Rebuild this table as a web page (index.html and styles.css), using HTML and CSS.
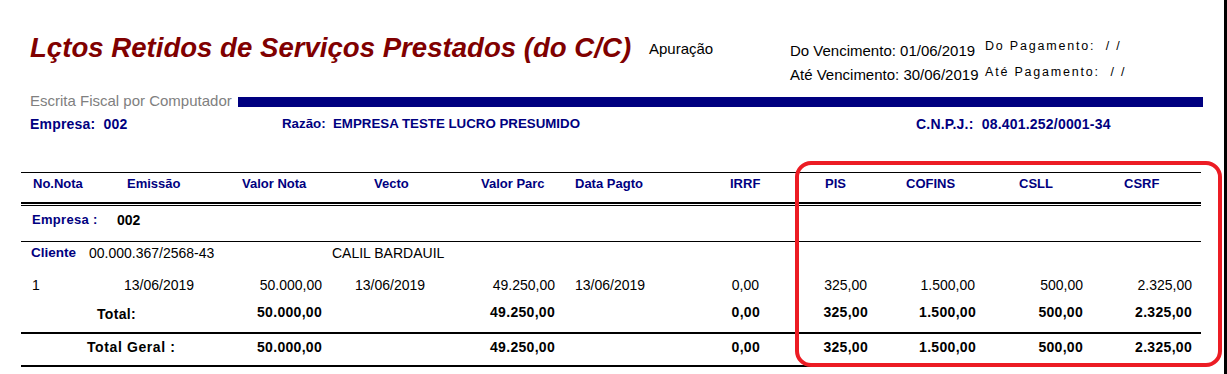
FILE: index.html
```html
<!DOCTYPE html>
<html lang="pt-BR">
<head>
<meta charset="utf-8">
<title>Lçtos Retidos de Serviços Prestados</title>
<link rel="stylesheet" href="styles.css">
</head>
<body>
<div class="page">
  <header class="head">
    <h1 class="title">Lçtos Retidos de Serviços Prestados (do C/C)</h1>
    <div class="apuracao">Apuração</div>
    <div class="venc">
      <div>Do Vencimento: 01/06/2019</div>
      <div>Até Vencimento: 30/06/2019</div>
    </div>
    <div class="pag">
      <div>Do Pagamento:&nbsp;&nbsp;/ /</div>
      <div>Até Pagamento:&nbsp;&nbsp;/ /</div>
    </div>
  </header>

  <div class="brand">
    <span class="brand-text">Escrita Fiscal por Computador</span>
    <span class="brand-bar"></span>
  </div>

  <div class="info">
    <div class="info-emp">Empresa:&nbsp;&nbsp;002</div>
    <div class="info-raz">Razão:&nbsp;&nbsp;EMPRESA TESTE LUCRO PRESUMIDO</div>
    <div class="info-cnpj">C.N.P.J.:&nbsp;&nbsp;08.401.252/0001-34</div>
  </div>

  <div class="report">
    <div class="row hdr">
      <div>No.Nota</div>
      <div>Emissão</div>
      <div>Valor Nota</div>
      <div>Vecto</div>
      <div>Valor Parc</div>
      <div>Data Pagto</div>
      <div>IRRF</div>
      <div>PIS</div>
      <div>COFINS</div>
      <div>CSLL</div>
      <div>CSRF</div>
    </div>
    <div class="rule-thick"></div>
    <div class="rule-thin"></div>

    <div class="grp">
      <span class="grp-label">Empresa :</span>
      <span class="grp-val">002</span>
    </div>

    <div class="cli">
      <span class="cli-label">Cliente</span>
      <span class="cli-code">00.000.367/2568-43</span>
      <span class="cli-name">CALIL BARDAUIL</span>
    </div>

    <div class="row data">
      <div>1</div>
      <div>13/06/2019</div>
      <div>50.000,00</div>
      <div>13/06/2019</div>
      <div>49.250,00</div>
      <div>13/06/2019</div>
      <div>0,00</div>
      <div>325,00</div>
      <div>1.500,00</div>
      <div>500,00</div>
      <div>2.325,00</div>
    </div>

    <div class="row tot sub">
      <div class="tot-label">Total:</div>
      <div>50.000,00</div>
      <div></div>
      <div>49.250,00</div>
      <div></div>
      <div>0,00</div>
      <div>325,00</div>
      <div>1.500,00</div>
      <div>500,00</div>
      <div>2.325,00</div>
    </div>

    <div class="row tot grand">
      <div class="tot-label">Total Geral :</div>
      <div>50.000,00</div>
      <div></div>
      <div>49.250,00</div>
      <div></div>
      <div>0,00</div>
      <div>325,00</div>
      <div>1.500,00</div>
      <div>500,00</div>
      <div>2.325,00</div>
    </div>
  </div>

  <div class="highlight"></div>
</div>
</body>
</html>
```

FILE: styles.css
```css
* { box-sizing: border-box; }
html, body { margin: 0; padding: 0; background: #fff; }
body { font-family: "Liberation Sans", Arial, sans-serif; color: #000; }

.page {
  position: relative;
  width: 1227px;
  height: 374px;
  border-right: 3px solid #000;
  overflow: hidden;
}

/* ---------- header ---------- */
.head {
  display: flex;
  align-items: flex-start;
  height: 90px;
  padding-left: 30px;
}
.title {
  margin: 32px 0 0;
  width: 619px;
  font-size: 27.6px;
  line-height: 32px;
  font-weight: bold;
  font-style: italic;
  color: #800000;
  white-space: nowrap;
}
.apuracao {
  margin-top: 40px;
  width: 141px;
  font-size: 15px;
  line-height: 18px;
}
.venc {
  margin-top: 39px;
  width: 195px;
  font-size: 15px;
  line-height: 24px;
  white-space: nowrap;
}
.pag {
  margin-top: 33px;
  font-size: 12.5px;
  line-height: 26px;
  letter-spacing: 1.8px;
  white-space: nowrap;
}

/* ---------- brand bar ---------- */
.brand {
  display: flex;
  align-items: center;
  height: 22px;
  padding-left: 30px;
}
.brand-text {
  width: 208px;
  font-size: 15px;
  line-height: 22px;
  color: #808080;
  white-space: nowrap;
}
.brand-bar {
  width: 965px;
  height: 10px;
  margin-top: 2px;
  background: #000080;
}

/* ---------- company info ---------- */
.info {
  display: flex;
  height: 24px;
  padding-left: 30px;
  font-size: 14px;
  line-height: 24px;
  font-weight: bold;
  color: #000080;
  white-space: nowrap;
}
.info-emp { width: 252px; letter-spacing: 0.2px; }
.info-raz { width: 634px; font-size: 13.3px; }
.info-cnpj { letter-spacing: 0.2px; }

/* ---------- report table ---------- */
.report {
  margin: 36px 0 0 21px;
  width: 1180px;
  border-top: 1px solid #000;
}
.row {
  display: grid;
  grid-template-columns: 89px 95px 120px 135px 100px 105px 100px 105px 110px 108px 113px;
  white-space: nowrap;
}

.hdr {
  height: 29px;
  font-size: 13px;
  line-height: 22px;
  font-weight: bold;
  color: #000080;
}
.hdr > :nth-child(1) { padding-left: 12px; }
.hdr > :nth-child(2) { padding-left: 17px; }
.hdr > :nth-child(3) { padding-left: 37px; }
.hdr > :nth-child(4) { padding-left: 49px; }
.hdr > :nth-child(5) { padding-left: 21px; }
.hdr > :nth-child(6) { padding-left: 15px; }
.hdr > :nth-child(7) { padding-left: 65px; }
.hdr > :nth-child(8) { padding-left: 60px; }
.hdr > :nth-child(9) { padding-left: 36px; }
.hdr > :nth-child(10) { padding-left: 39px; }
.hdr > :nth-child(11) { padding-left: 36px; }

.rule-thick { height: 2px; background: #000; margin-bottom: 1px; }
.rule-thin { height: 1px; background: #000; }

.grp {
  display: flex;
  height: 36px;
  padding: 4px 0 0 11px;
  line-height: 20px;
  border-bottom: 1px solid #000;
  font-weight: bold;
  white-space: nowrap;
}
.grp-label { width: 85px; font-size: 13px; color: #000080; letter-spacing: 0.3px; }
.grp-val { font-size: 14px; }

.cli {
  display: flex;
  height: 32px;
  padding-left: 10px;
  line-height: 22px;
  font-size: 14px;
  white-space: nowrap;
}
.cli-label { width: 58px; font-size: 13.5px; font-weight: bold; color: #000080; }
.cli-code { width: 243px; }

.data {
  height: 22px;
  font-size: 14px;
  line-height: 22px;
}
.data > :nth-child(1) { padding-left: 11px; }
.data > :nth-child(2) { padding-left: 14px; }
.data > :nth-child(3) { text-align: right; padding-right: 3px; }
.data > :nth-child(4) { padding-left: 30px; }
.data > :nth-child(5) { text-align: right; padding-right: 5px; }
.data > :nth-child(6) { padding-left: 15px; }
.data > :nth-child(7) { text-align: right; padding-right: 6px; }
.data > :nth-child(8) { text-align: right; padding-right: 3px; }
.data > :nth-child(9) { text-align: right; padding-right: 5px; }
.data > :nth-child(10) { text-align: right; padding-right: 5px; }
.data > :nth-child(11) { text-align: right; padding-right: 9px; }

.tot {
  font-size: 14px;
  line-height: 22px;
  font-weight: bold;
  letter-spacing: 0.3px;
  text-align: right;
  border-bottom: 2px solid #000;
}
.tot > div { padding-right: 5px; }
.tot > .tot-label { grid-column: span 2; text-align: left; padding-right: 0; }
.tot > :nth-child(2) { padding-right: 3px; }
.tot > :nth-child(7) { padding-right: 2px; }
.tot > :nth-child(8) { padding-right: 4px; }
.tot > :nth-child(10) { padding-right: 9px; }

.sub { height: 38px; padding-top: 5px; }
.sub > .tot-label { padding-left: 76px; padding-top: 2px; }
.grand { height: 33px; padding-top: 2px; }
.grand > .tot-label { padding-left: 66px; letter-spacing: 0.6px; }

/* ---------- annotation ---------- */
.highlight {
  position: absolute;
  left: 795px;
  top: 161px;
  width: 427px;
  height: 206px;
  border: 4px solid #ec1c24;
  border-radius: 16px;
  pointer-events: none;
}
```
